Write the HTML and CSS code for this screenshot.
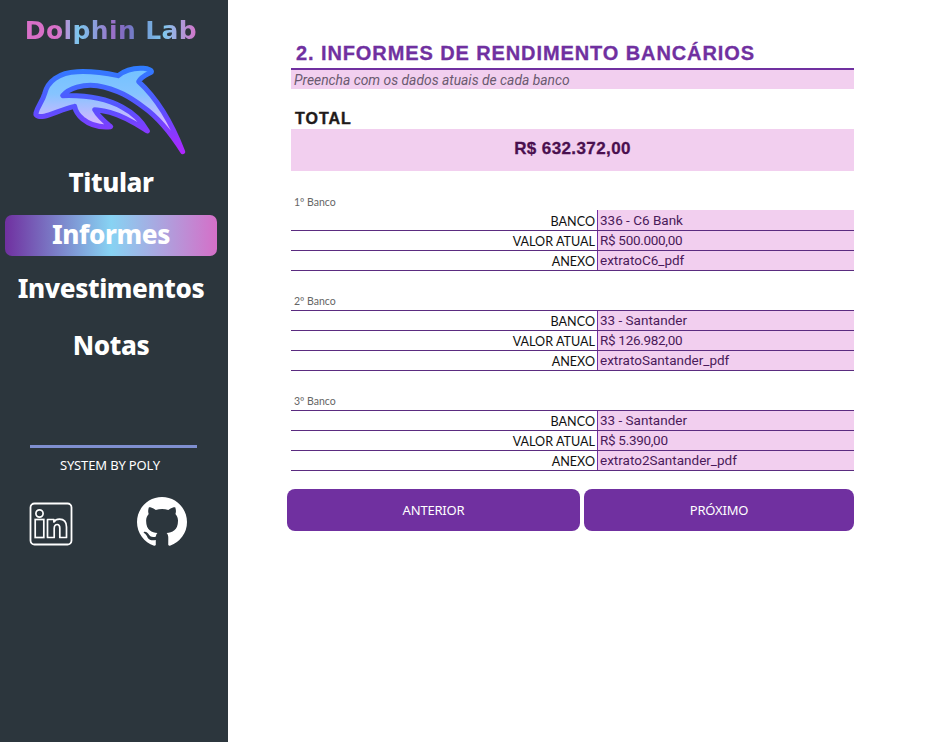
FILE: index.html
```html
<!DOCTYPE html>
<html lang="pt-BR">
<head>
    <meta charset="UTF-8">
    <meta name="viewport" content="width=device-width, initial-scale=1.0">
    <title>Dolphin Lab - Informes</title>
    <link rel="stylesheet" href="styles.css">
</head>
<body>
    <aside class="sidebar">
        <div class="brand">Dolphin Lab</div>
        <svg class="logo" viewBox="90 190 480 285" width="160" height="95" aria-hidden="true">
            <defs>
                <linearGradient id="dolphinStroke" gradientUnits="userSpaceOnUse" x1="0" y1="200" x2="0" y2="460">
                    <stop offset="0" stop-color="#2f7dff"/>
                    <stop offset="0.5" stop-color="#5a4fff"/>
                    <stop offset="1" stop-color="#b026ff"/>
                </linearGradient>
                <linearGradient id="dolphinFill" gradientUnits="userSpaceOnUse" x1="0" y1="215" x2="0" y2="385">
                    <stop offset="0" stop-color="#74c2ff"/>
                    <stop offset="0.4" stop-color="#86c4ff"/>
                    <stop offset="1" stop-color="#e2b4ff"/>
                </linearGradient>
            </defs>
            <path fill="url(#dolphinFill)" stroke="url(#dolphinStroke)" stroke-width="15" stroke-linejoin="round"
                  d="M108 340C114 318 128 304 134 282C142 246 176 218 232 216C272 214 316 220 354 228C372 214 400 204 430 206C446 207 456 212 454 217C442 224 424 230 416 246C462 288 506 346 548 456C520 412 484 360 430 322C392 294 352 268 292 258C250 252 206 266 188 288C250 286 318 296 366 322C400 340 426 366 442 394C420 380 380 352 330 338C314 334 298 330 284 330C296 352 314 366 332 381C300 384 270 376 248 358C234 346 226 332 224 320C196 326 160 342 132 350C118 352 106 350 108 340Z"/>
        </svg>
        <nav class="menu">
            <a class="menu-item">Titular</a>
            <a class="menu-item active">Informes</a>
            <a class="menu-item">Investimentos</a>
            <a class="menu-item">Notas</a>
        </nav>
        <div class="credit">SYSTEM BY POLY</div>
        <div class="social">
            <svg class="linkedin" viewBox="0 0 44 44" width="44" height="44" aria-hidden="true">
                <rect x="1.5" y="1.5" width="41" height="41" rx="4" fill="none" stroke="#fff" stroke-width="1.8"/>
                <circle cx="10.500" cy="11.500" r="3.600" fill="none" stroke="#fff" stroke-width="1.700"/>
                <rect x="6.200" y="17.500" width="8.600" height="18" fill="none" stroke="#fff" stroke-width="1.700"/>
                <path fill="none" stroke="#fff" stroke-width="1.700" stroke-linejoin="round" d="M18.500 17.500h6.400v2.400c1.300-1.900 3.300-2.800 5.500-2.800 5 0 7.100 3 7.100 8v10.400h-6.700V26.200c0-2.500-.8-3.700-2.500-3.700-2 0-3.100 1.400-3.100 3.900v9.100h-6.700z"/>
            </svg>
            <svg class="github" viewBox="0 0 16 16" width="50" height="50" aria-hidden="true">
                <path fill="#fff" d="M8 0C3.58 0 0 3.58 0 8c0 3.54 2.29 6.53 5.47 7.59.4.07.55-.17.55-.38 0-.19-.01-.82-.01-1.49-2.01.37-2.53-.49-2.69-.94-.09-.23-.48-.94-.82-1.13-.28-.15-.68-.52-.01-.53.63-.01 1.08.58 1.23.82.72 1.21 1.87.87 2.33.66.07-.52.28-.87.51-1.07-1.78-.2-3.64-.89-3.64-3.95 0-.87.31-1.59.82-2.15-.08-.2-.36-1.02.08-2.12 0 0 .67-.21 2.2.82.64-.18 1.32-.27 2-.27s1.36.09 2 .27c1.53-1.04 2.2-.82 2.2-.82.44 1.1.16 1.92.08 2.12.51.56.82 1.27.82 2.15 0 3.07-1.87 3.75-3.65 3.95.29.25.54.73.54 1.48 0 1.07-.01 1.93-.01 2.2 0 .21.15.46.55.38A8.013 8.013 0 0016 8c0-4.42-3.58-8-8-8z"/>
            </svg>
        </div>
    </aside>

    <main class="content">
        <h1 class="title">2. INFORMES DE RENDIMENTO BANCÁRIOS</h1>
        <p class="subtitle">Preencha com os dados atuais de cada banco</p>

        <h2 class="total-label">TOTAL</h2>
        <div class="total-value">R$ 632.372,00</div>

        <section class="bank">
            <div class="bank-name">1º Banco</div>
            <div class="rows first">
                <div class="row"><span class="label">BANCO</span><span class="value">336 - C6 Bank</span></div>
                <div class="row"><span class="label">VALOR ATUAL</span><span class="value money">R$ 500.000,00</span></div>
                <div class="row"><span class="label">ANEXO</span><span class="value">extratoC6_pdf</span></div>
            </div>
        </section>

        <section class="bank">
            <div class="bank-name">2º Banco</div>
            <div class="rows">
                <div class="row"><span class="label">BANCO</span><span class="value">33 - Santander</span></div>
                <div class="row"><span class="label">VALOR ATUAL</span><span class="value money">R$ 126.982,00</span></div>
                <div class="row"><span class="label">ANEXO</span><span class="value">extratoSantander_pdf</span></div>
            </div>
        </section>

        <section class="bank">
            <div class="bank-name">3º Banco</div>
            <div class="rows">
                <div class="row"><span class="label">BANCO</span><span class="value">33 - Santander</span></div>
                <div class="row"><span class="label">VALOR ATUAL</span><span class="value money">R$ 5.390,00</span></div>
                <div class="row"><span class="label">ANEXO</span><span class="value">extrato2Santander_pdf</span></div>
            </div>
        </section>

        <div class="actions">
            <button>ANTERIOR</button>
            <button>PRÓXIMO</button>
        </div>
    </main>
</body>
</html>
```

FILE: styles.css
```css
body {
    margin: 0;
    height: 100vh;
    display: flex;
    background-color: #fff;
    font-family: "Noto Sans", sans-serif;
    overflow: hidden;
}
.sidebar {
    width: 228px;
    flex-shrink: 0;
    box-sizing: border-box;
    padding-top: 15px;
    background-color: #2c363d;
    display: flex;
    flex-direction: column;
}
.brand {
    height: 32px;
    line-height: 32px;
    text-align: center;
    padding-right: 6px;
    font-family: "DejaVu Sans", sans-serif;
    font-size: 25px;
    font-weight: bold;
    letter-spacing: 0.4px;
    background: linear-gradient(90deg, #d870c8 0%, #d870c8 18%, #7cc8ee 30%, #9a70c8 50%, #7a6cc0 58%, #6f90d0 66%, #80c8ee 80%, #d870c8 100%) no-repeat 27px 0 / 171px 100%;
    -webkit-background-clip: text;
    background-clip: text;
    color: transparent;
}
.logo {
    margin: 16px 0 0 30px;
    display: block;
}
.menu {
    margin-top: 4px;
    padding: 0 11px 0 5px;
    display: flex;
    flex-direction: column;
    gap: 12px;
}
.menu-item {
    height: 41px;
    line-height: 41px;
    text-align: center;
    color: #fff;
    font-size: 26px;
    font-weight: 800;
    letter-spacing: -0.4px;
    border-radius: 7px;
}
.menu-item:last-child {
    margin-top: 4px;
}
.menu-item.active {
    line-height: 39px;
    background: linear-gradient(90deg, #7030a0 0%, #87d3f3 50%, #d56fc8 100%);
}
.credit {
    margin: 79px 31px 0 30px;
    border-top: 3px solid #7f8fd0;
    padding: 8px 7px 0 0;
    text-align: center;
    color: #fff;
    font-size: 13px;
    letter-spacing: -0.15px;
    line-height: 18px;
}
.social {
    margin: 23px 0 0 29px;
    display: flex;
    align-items: flex-start;
    gap: 64px;
}
.linkedin {
    margin-top: 5px;
}
.content {
    width: 563px;
    margin-left: 63px;
    padding-top: 40px;
}
.title {
    margin: 0;
    height: 28px;
    line-height: 26px;
    padding-left: 5px;
    border-bottom: 2px solid #7030a0;
    color: #7030a0;
    font-family: "Liberation Sans", sans-serif;
    font-size: 20px;
    font-weight: bold;
    letter-spacing: 0.9px;
    -webkit-text-stroke: 0.3px #7030a0;
}
.subtitle {
    margin: 0;
    height: 19px;
    line-height: 20px;
    padding-left: 3px;
    background-color: #f2cfef;
    color: #6a5a70;
    font-family: Roboto, sans-serif;
    font-size: 13.85px;
    font-style: italic;
}
.total-label {
    margin: 19px 0 0;
    height: 21px;
    line-height: 21px;
    padding-left: 4px;
    color: #1f1a1a;
    font-family: "Liberation Sans", sans-serif;
    font-size: 16px;
    font-weight: bold;
    letter-spacing: 1px;
    -webkit-text-stroke: 0.4px #1f1a1a;
}
.total-value {
    height: 42px;
    line-height: 40px;
    text-align: center;
    background-color: #f2cfef;
    color: #4a0f4f;
    font-family: "Liberation Sans", sans-serif;
    font-size: 17px;
    font-weight: bold;
    letter-spacing: 0.4px;
    -webkit-text-stroke: 0.3px #4a0f4f;
}
.bank {
    margin-top: 24px;
}
.bank-name {
    height: 15px;
    line-height: 12px;
    padding-left: 3px;
    color: #666;
    font-family: Lato, sans-serif;
    font-size: 10.5px;
}
.bank:first-of-type .bank-name {
    line-height: 14px;
}
.rows {
    border-top: 1px solid #5b2c80;
}
.rows.first {
    border-top-color: transparent;
}
.rows.first .row:first-child .value {
    margin-top: -1px;
    padding-top: 1px;
}
.row {
    display: grid;
    grid-template-columns: 306px 1fr;
    grid-template-rows: 19px;
    height: 20px;
    box-sizing: border-box;
    border-bottom: 1px solid #5b2c80;
    line-height: 19px;
}
.label {
    text-align: right;
    padding-right: 2px;
    color: #111;
    font-family: Lato, sans-serif;
    font-size: 12.6px;
    line-height: 21px;
}
.value {
    padding-left: 2px;
    border-left: 1px solid #7030a0;
    background-color: #f2cfef;
    color: #4a1a5a;
    font-family: Roboto, sans-serif;
    font-size: 13.5px;
}
.value.money {
    letter-spacing: -0.3px;
}
.actions {
    margin: 18px 0 0 -4px;
    display: grid;
    grid-template-columns: 293px 270px;
    gap: 4px;
}
button {
    height: 42px;
    border: none;
    border-radius: 8px;
    background-color: #7030a0;
    color: #fff;
    font-family: "Noto Sans", sans-serif;
    font-size: 13px;
    letter-spacing: -0.2px;
    cursor: pointer;
}
```
